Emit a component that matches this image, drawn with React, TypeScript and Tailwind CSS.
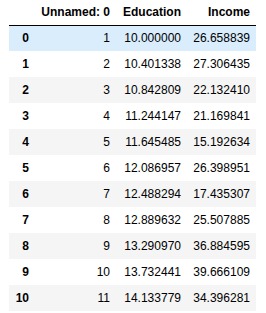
const rows: [number, number, string, string][] = [
  [0, 1, "10.000000", "26.658839"],
  [1, 2, "10.401338", "27.306435"],
  [2, 3, "10.842809", "22.132410"],
  [3, 4, "11.244147", "21.169841"],
  [4, 5, "11.645485", "15.192634"],
  [5, 6, "12.086957", "26.398951"],
  [6, 7, "12.488294", "17.435307"],
  [7, 8, "12.889632", "25.507885"],
  [8, 9, "13.290970", "36.884595"],
  [9, 10, "13.732441", "39.666109"],
  [10, 11, "14.133779", "34.396281"],
];

export default function App() {
  return (
    <div className="h-[313px] w-[266px] bg-white font-['Liberation_Sans',Arial,sans-serif] text-[12px] leading-[14px] text-black">
      <table className="ml-[9px] table-fixed border-collapse">
        <colgroup>
          <col className="w-[26px]" />
          <col className="w-[81px]" />
          <col className="w-[71px]" />
          <col className="w-[69px]" />
        </colgroup>
        <thead className="border-b border-black">
          <tr className="h-[25px]">
            <th className="px-[6px] text-right font-bold"></th>
            <th className="px-[6px] text-right font-bold">Unnamed: 0</th>
            <th className="px-[6px] text-right font-bold">Education</th>
            <th className="px-[6px] text-right font-bold">Income</th>
          </tr>
        </thead>
        <tbody>
          {rows.map(([i, u, e, inc]) => (
            <tr
              key={i}
              className={`h-[26px] ${i === 0 ? "bg-[#d9edfd]" : i % 2 === 0 ? "bg-[#f5f5f5]" : "bg-white"}`}
            >
              <th className="px-[6px] text-right font-bold">{i}</th>
              <td className="px-[6px] text-right">{u}</td>
              <td className="px-[6px] text-right">{e}</td>
              <td className="px-[6px] text-right">{inc}</td>
            </tr>
          ))}
        </tbody>
      </table>
    </div>
  );
}
